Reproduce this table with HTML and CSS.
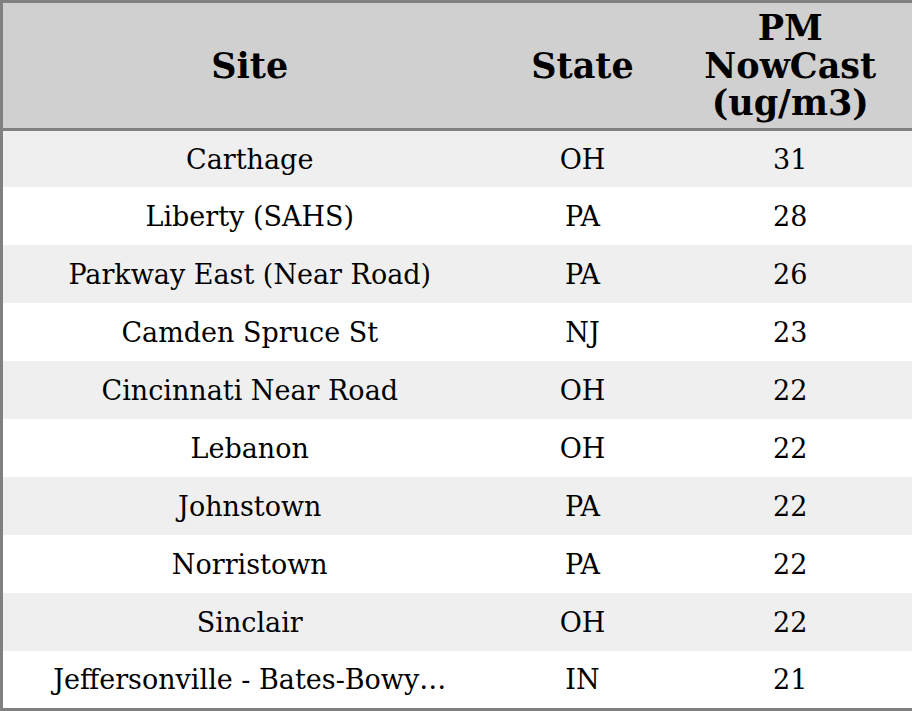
FILE: index.html
```html
<!DOCTYPE html>
<html>
<head>
<meta charset="utf-8">
<link rel="stylesheet" href="styles.css">
</head>
<body>
<table class="aq-table">
  <colgroup>
    <col class="col-site">
    <col class="col-state">
    <col class="col-pm">
  </colgroup>
  <thead>
    <tr class="head-row">
      <th>Site</th>
      <th>State</th>
      <th>PM<br>NowCast<br>(ug/m3)</th>
    </tr>
  </thead>
  <tbody>
    <tr><td>Carthage</td><td>OH</td><td>31</td></tr>
    <tr><td>Liberty (SAHS)</td><td>PA</td><td>28</td></tr>
    <tr><td>Parkway East (Near Road)</td><td>PA</td><td>26</td></tr>
    <tr><td>Camden Spruce St</td><td>NJ</td><td>23</td></tr>
    <tr><td>Cincinnati Near Road</td><td>OH</td><td>22</td></tr>
    <tr><td>Lebanon</td><td>OH</td><td>22</td></tr>
    <tr><td>Johnstown</td><td>PA</td><td>22</td></tr>
    <tr><td>Norristown</td><td>PA</td><td>22</td></tr>
    <tr><td>Sinclair</td><td>OH</td><td>22</td></tr>
    <tr><td>Jeffersonville - Bates-Bowy…</td><td>IN</td><td>21</td></tr>
  </tbody>
</table>
</body>
</html>
```

FILE: styles.css
```css
html, body {
  margin: 0;
  padding: 0;
  background: #ffffff;
}
body {
  width: 912px;
  height: 711px;
  overflow: hidden;
}
.aq-table {
  width: 912px;
  border-collapse: collapse;
  border: 3px solid #808080;
  table-layout: fixed;
  font-family: "DejaVu Serif", serif;
  color: #000;
}
.col-site { width: 495px; }
.col-state { width: 172px; }
.col-pm { width: 245px; }
.aq-table th {
  background: #d0d0d0;
  font-weight: bold;
  font-size: 35px;
  line-height: 37.5px;
  height: 128px;
  padding: 0 4px;
  text-align: center;
  vertical-align: middle;
  border-bottom: 3px solid #808080;
  box-sizing: border-box;
}
.aq-table td {
  font-size: 27px;
  height: 58px;
  padding: 0 4px;
  text-align: center;
  vertical-align: middle;
  white-space: nowrap;
  box-sizing: border-box;
}
.aq-table tbody tr:nth-child(odd) td { background: #efefef; }
.aq-table tbody tr:nth-child(even) td { background: #ffffff; }
.aq-table tbody tr:first-child td { height: 57.5px; }
.aq-table tbody tr:last-child td { height: 58.5px; }
```
